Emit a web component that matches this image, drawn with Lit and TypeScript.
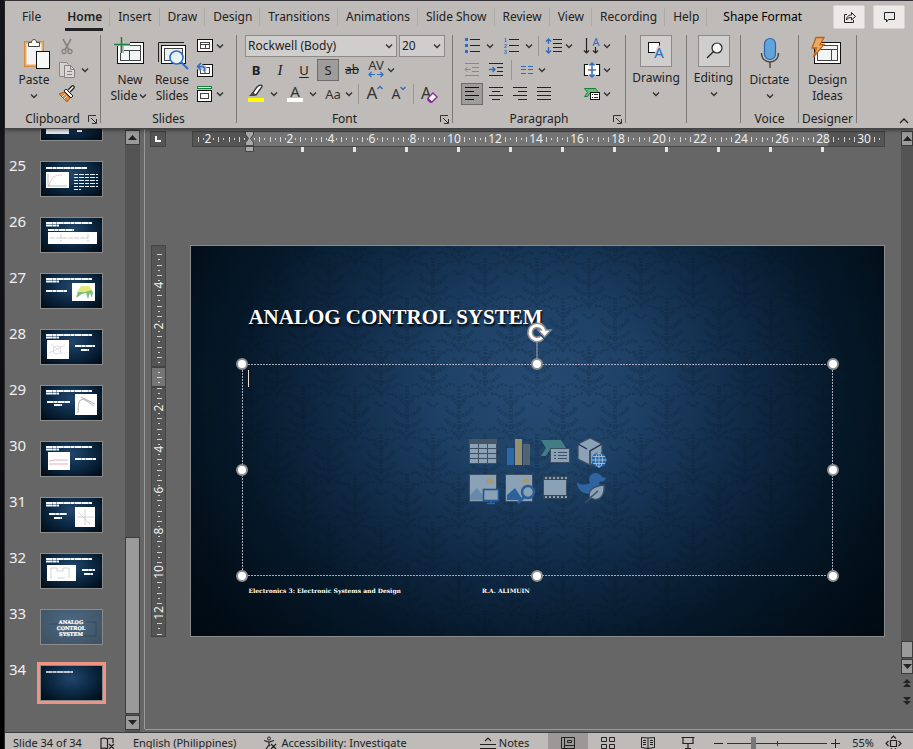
import { LitElement, html, svg, css } from "lit";
import { customElement, property } from "lit/decorators.js";

const chev = html`<svg class="chev" width="12" height="16" viewBox="0 0 12 16"><path d="M3 6.5l3 3 3-3" fill="none" stroke="#333" stroke-width="1.4"/></svg>`;

const icon = (w: number, body: unknown, h = 24) =>
  html`<svg width=${w} height=${h} viewBox="0 0 ${w} ${h}" aria-hidden="true">${body}</svg>`;

/* ---------- ribbon glyphs ---------- */
const I = {
  paste: svg`<rect x="11.500" y="7.500" width="19" height="25" fill="#f2f4f4" stroke="#c06c20" stroke-width="1"/><rect x="12.500" y="8.500" width="17" height="23" fill="none" stroke="#e9ab63" stroke-width="2"/><path d="M15.500 12.500v-4h3c0-4 5-4 5 0h3v4z" fill="#fff" stroke="#444"/><rect x="23.500" y="17.500" width="13" height="17" fill="#f8fafa" stroke="#111"/>`,
  cut: svg`<path d="M8 5l6 11M16 5l-6 11" stroke="#85827f" stroke-width="1.600" fill="none"/><circle cx="9" cy="17.500" r="2" fill="none" stroke="#85827f" stroke-width="1.300"/><circle cx="15" cy="17.500" r="2" fill="none" stroke="#85827f" stroke-width="1.300"/>`,
  copy: svg`<path d="M10 18.500H4.500v-14h7l2 2" fill="#d4d1cf" stroke="#8a8785"/><path d="M9.500 7.500h6l4 4v8h-10z" fill="#dad8d6" stroke="#85827f"/><path d="M15.500 7.500v4h4M12 13.500h5M12 16.500h5" stroke="#85827f" fill="none"/>`,
  painter: svg`<path d="M4 12l5-2 6 6-3 4z" fill="#e38a3c" stroke="#b8611a"/><path d="M7 15l3-3M9 17l3-3" stroke="#fbe0c0"/><path d="M9 9l2-2 7 7-2 2z" fill="#fff" stroke="#222"/><path d="M13 8l4-4c1-1 3 1 2 2l-4 4" fill="#fff" stroke="#222" stroke-width="1.300"/>`,
  newSlide: svg`<rect x="8.500" y="8.500" width="26" height="21" fill="#fff" stroke="#111"/><rect x="11.500" y="11.500" width="20" height="15" fill="#f2f5f5" stroke="#444"/><path d="M11 16.500h20M20.500 16.500v10" stroke="#444"/><path d="M4 10h17M13 2v17" stroke="#bfbbb8" stroke-width="4"/><path d="M5 10.500h16M12.500 3v16" stroke="#16803c" stroke-width="1.400"/>`,
  reuse: svg`<path d="M7.500 28V8.500H33" fill="none" stroke="#222"/><rect x="10.500" y="11.500" width="24" height="18" fill="#fff" stroke="#111"/><rect x="13.500" y="14.500" width="18" height="12" fill="#eef1f1" stroke="#444"/><circle cx="25.500" cy="23.500" r="6.500" fill="#e8f3f8" stroke="#2f6cc0" stroke-width="1.600"/><path d="M30 28l7 7" stroke="#2f6cc0" stroke-width="1.800"/>`,
  layout: svg`<rect x="1.500" y="5.500" width="15" height="12" fill="#fff" stroke="#111"/><rect x="4.500" y="8.500" width="9" height="6" fill="#fff" stroke="#444"/><path d="M4 10.500h10M9.500 10.500v4" stroke="#444"/>`,
  reset: svg`<rect x="1.500" y="6.500" width="15" height="12" fill="#fff" stroke="#111"/><rect x="4.500" y="9.500" width="9" height="6" fill="#fff" stroke="#444"/><path d="M9 10v5" stroke="#444"/><path d="M2 8.500h4c3 0 3 3 2 5M5 5L1.500 8.500 5 12" fill="none" stroke="#bfbbb8" stroke-width="4"/><path d="M2 8.500h4c3 0 3 3 2 5M5 5L1.500 8.500 5 12" fill="none" stroke="#2f6cc0" stroke-width="1.500"/>`,
  section: svg`<rect x="1.500" y="4.500" width="14" height="2" fill="#e4f2e6" stroke="#16803c"/><rect x="1.500" y="8.500" width="14" height="11" fill="#fff" stroke="#111"/><rect x="4.500" y="11.500" width="8" height="5" fill="#fff" stroke="#444"/>`,
  spacing: svg`<text x="9" y="12" text-anchor="middle" font-size="13" fill="#333">AV</text><path d="M2 16.500h6M10 16.500h6M4.500 14L2 16.500 4.500 19M13.500 14l2.500 2.500-2.500 2.500" fill="none" stroke="#2f6cc0" stroke-width="1.200"/>`,
  highlight: svg`<path d="M8 12l5-7c3-3 7-2 4 1l-5 7z" fill="#fff" stroke="#333" stroke-width="1.300"/><path d="M5 14l4-4 3 3-2 1z" fill="#444"/><rect x="4" y="16" width="16" height="4" fill="#ff0"/>`,
  fontColor: svg`<text x="12" y="15" text-anchor="middle" font-size="15" fill="#333">A</text><rect x="4" y="16" width="16" height="4" fill="#fff"/>`,
  changeCase: svg`<text x="8" y="17" text-anchor="middle" font-size="13" fill="#333">Aa</text>`,
  grow: svg`<text x="10" y="17" text-anchor="middle" font-size="17" fill="#333">A</text><path d="M15.500 7l2.500-2.500L20.500 7" fill="none" stroke="#2f6cc0" stroke-width="1.300"/>`,
  shrink: svg`<text x="10" y="17" text-anchor="middle" font-size="14" fill="#333">A</text><path d="M14.500 5l2.500 2.500L19.500 5" fill="none" stroke="#2f6cc0" stroke-width="1.300"/>`,
  clear: svg`<text x="9" y="17" text-anchor="middle" font-size="16" fill="#333">A</text><path d="M11 16l5-5 4 4-5 5h-2l-2-2z" fill="#fff" stroke="#8b2a9b" stroke-width="1.400"/><path d="M11 16l4 4h-2l-2-2z" fill="#8b2a9b" stroke="#8b2a9b"/>`,
  bullets: svg`<path d="M5 4h3v3H5zM5 10h3v3H5zM5 16h3v3H5z" fill="#2f6cc0"/><path d="M10 5.500h10M10 11.500h10M10 17.500h10" stroke="#222"/>`,
  numbers: svg`<g font-family="'Liberation Sans',sans-serif" font-size="5" font-weight="700" fill="#2f6cc0"><text x="5" y="8">1</text><text x="5" y="14">2</text><text x="5" y="20">3</text></g><path d="M10 5.500h10M10 11.500h10M10 17.500h10" stroke="#222"/>`,
  lineSpace: svg`<path d="M3.500 5v5M3.500 13v6M1 7.500L3.500 5 6 7.500M1 16.500L3.500 19 6 16.500" fill="none" stroke="#2f6cc0" stroke-width="1.400"/><path d="M8 5.500h9M8 9.500h9M8 13.500h9M8 17.500h9" stroke="#222"/>`,
  direction: svg`<path d="M3.500 4v15M1 16.500L3.500 19 6 16.500M12.500 13v6M10 16.500l2.500 2.500 2.500-2.500" fill="none" stroke="#222" stroke-width="1.200"/><text x="13" y="12" text-anchor="middle" font-size="11" fill="#2f6cc0">A</text>`,
  outdent: svg`<path d="M5 5.500h14M12 9.500h7M12 13.500h7M5 17.500h14M5 11.500h6M7.500 9L5 11.500 7.500 14" fill="none" stroke="#8a8785"/>`,
  indent: svg`<path d="M5 5.500h14M13 9.500h6M13 13.500h6M5 17.500h14" stroke="#222"/><path d="M5 11.500h6M8.500 9l2.500 2.500L8.500 14" fill="none" stroke="#2f6cc0" stroke-width="1.400"/>`,
  columns: svg`<path d="M3 8.500h5M10 8.500h5M3 11.500h5M10 11.500h5M3 15.500h5M10 15.500h5" stroke="#2f6cc0"/>`,
  alignText: svg`<path d="M5 6.500H1.500v11H5M13 6.500h3.500v11H13" fill="none" stroke="#111" stroke-width="1.200"/><rect x="2" y="7" width="14" height="10" fill="#fff"/><path d="M5 12h8" stroke="#222"/><path d="M9 5v14M6.500 7.500L9 5l2.500 2.500M6.500 16.500L9 19l2.500-2.500" fill="none" stroke="#2f6cc0" stroke-width="1.500"/>`,
  smartArt: svg`<path d="M1.500 6.500h11l3 4h-8l-3 4h-3l3-4z" fill="#6aba7a" stroke="#16803c"/><rect x="7.500" y="10.500" width="9" height="7" fill="#fff" stroke="#111"/><path d="M9 12.500h1M11 12.500h4M9 15.500h1M11 15.500h4" stroke="#222"/>`,
  left: svg`<path d="M5 5.500h14M5 9.500h9M5 13.500h14M5 17.500h9" stroke="#111"/>`,
  center: svg`<path d="M5 5.500h14M8 9.500h8M5 13.500h14M8 17.500h8" stroke="#222"/>`,
  right: svg`<path d="M5 5.500h14M10 9.500h9M5 13.500h14M10 17.500h9" stroke="#222"/>`,
  justify: svg`<path d="M5 5.500h14M5 9.500h14M5 13.500h14M5 17.500h14" stroke="#222"/>`,
  drawing: svg`<rect x="7.500" y="6.500" width="11" height="10" fill="#fff" stroke="#111"/><text x="18" y="22" text-anchor="middle" font-size="15" fill="#2f6cc0" stroke="#d0cecd" stroke-width="3" paint-order="stroke">A</text>`,
  editing: svg`<circle cx="18" cy="12" r="5" fill="#f4f7f7" stroke="#222" stroke-width="1.200"/><path d="M14.500 15.500L8 22" stroke="#222" stroke-width="1.300"/>`,
  mic: svg`<rect x="15.500" y="4.500" width="11" height="21" rx="5.500" fill="#62a4da" stroke="#2b63b0" stroke-width="1.200"/><path d="M12.500 19c0 12 17 12 17 0M21 28v6" fill="none" stroke="#444" stroke-width="1.400"/>`,
  ideas: svg`<rect x="7.500" y="8.500" width="26" height="21" fill="#fff" stroke="#111"/><rect x="10.500" y="11.500" width="20" height="15" fill="#f3f5f5" stroke="#444"/><path d="M10 15.500h21M24.500 15.500v11" stroke="#444"/><path d="M9 3.500h8l-4 7h4L6.500 23l3-9H5z" fill="#e9ab63" stroke="#b8611a" stroke-width="1.300"/>`,
};

/* ---------- slide content placeholder glyphs, 36 x 36 ---------- */
const P = "#8ba1b5";
const D = "#3c4f62";
const inserts: [string, unknown][] = [
  ["Table", svg`<rect x="4.500" y="5.500" width="27" height="24" fill="${P}" stroke="${D}"/><path d="M4 5h28v5H4z" fill="#465665"/><path d="M4 14.500h28M4 19.500h28M4 24.500h28M13.500 10v20M22.500 10v20" stroke="${D}"/>`],
  ["Chart", svg`<path d="M6 14h7v17H6z" fill="#2f66a5"/><path d="M14 5h7v26h-7z" fill="#94906f"/><path d="M22 10h7v21h-7z" fill="#526374"/>`],
  ["SmartArt", svg`<path d="M4 6h20l5 8H14l-5 8H4l5-8z" fill="#427c85"/><rect x="13.500" y="14.500" width="19" height="14" fill="${P}" stroke="${D}"/><path d="M17 18.500h2M21 18.500h9M17 21.500h2M21 21.500h9M17 24.500h2M21 24.500h9" stroke="${D}"/>`],
  ["3D model", svg`<path d="M17 4l12 6v15l-12 6-12-6V10z" fill="${P}" stroke="${D}" stroke-width="1.300"/><path d="M5 10l9 5M17 30V17l12-7" fill="none" stroke="#203040" stroke-width="1.400"/><circle cx="26" cy="26" r="7.500" fill="#2668ac" /><path d="M18.500 26h15M26 18.500v15M20 22.500h12M20 29.500h12" stroke="#9fb9d2"/><ellipse cx="26" cy="26" rx="3.500" ry="7" fill="none" stroke="#9fb9d2"/>`],
  ["Picture from file", svg`<rect x="4.500" y="4.500" width="27" height="27" fill="${P}" stroke="${D}"/><path d="M5 30v-5l7-7 10 12z" fill="#6689ac"/><circle cx="25" cy="11" r="3" fill="#a39a70"/><rect x="18.500" y="19.500" width="15" height="11" fill="${P}" stroke="#1e5898" stroke-width="1.600"/><path d="M22 33.500h8M26 31v3" stroke="#2f66a5" stroke-width="1.500"/>`],
  ["Stock image", svg`<rect x="4.500" y="4.500" width="27" height="27" fill="${P}" stroke="${D}"/><path d="M6 30v-5l8-7 8 12z" fill="#2c619c"/><circle cx="25" cy="11" r="3" fill="#a39a70"/><circle cx="27" cy="22" r="6" fill="${P}" stroke="#2a5f9b" stroke-width="2.500"/><path d="M23 27l-6 6" stroke="#2a5f9b" stroke-width="3"/>`],
  ["Video", svg`<rect x="6.500" y="6.500" width="23" height="22" fill="${P}" stroke="${D}"/><path d="M6 8h24M6 27h24" stroke="#34475a" stroke-width="4"/><path d="M8 8h22M8 27h22" stroke="${P}" stroke-width="2" stroke-dasharray="2 2"/>`],
  ["Icon", svg`<path d="M4 12c4 4 8 3 13 1-2-3-1-9 5-10 4 0 6 2 7 4l4 1c-1 3-4 4-7 4 2 5-1 9-6 11-9 3-16-3-16-11z" fill="#2e649f"/><path d="M12 33l5-5c-3-7 3-12 14-13 1 11-5 17-13 13M17 28l8-7" fill="${P}" stroke="${D}" stroke-width="1.300"/>`],
];

/* ---------- thumbnails, 61 x 34 ---------- */
const lineText = (x: number, y: number, w: number) =>
  svg`<path d="M${x} ${y}h${w}" stroke="#f4f8fb" stroke-width="2" stroke-dasharray="6 .3 4 .4 7 .3"/>`;
const heading = svg`${lineText(5, 5, 46)}${lineText(5, 7.5, 13)}`;
const thumbs: { n: number; art: unknown }[] = [
  { n: 24, art: svg`<rect x="5" y="14" width="23" height="14" fill="#e6eaee"/>${lineText(36, 25, 5)}` },
  { n: 25, art: svg`${lineText(5, 6, 41)}<rect x="5" y="10" width="23" height="16" fill="#fff"/><path d="M8 24c2-9 6-11 13-11" fill="none" stroke="#f0a090" stroke-width=".6"/><path d="M7 12v12h19" fill="none" stroke="#777" stroke-width=".5"/><path d="M33 12.500h24M33 15.500h24M33 18.500h24M33 21.500h24M33 24.500h24M33 27.500h7" stroke="#e5edf2" stroke-dasharray="4 1 5 1"/>` },
  { n: 26, art: svg`${heading}${lineText(7, 12, 26)}<rect x="7" y="14" width="49" height="12" fill="#fff"/><path d="M9 20h38M20 16v8M47 16v8" stroke="#999" stroke-width=".5" stroke-dasharray="5 1"/>` },
  { n: 27, art: svg`${heading}${lineText(5, 17, 21)}<rect x="31" y="9" width="23" height="18" fill="#fff"/><path d="M35 24l2-7 5-4h6l4 5-1 6-2-5-2 6-2-6-4 1z" fill="#7fc07a"/><path d="M36 18l4-6h8l3 4-7 2z" fill="#e3e97a"/>` },
  { n: 28, art: svg`${heading}${lineText(34, 16, 20)}${lineText(40, 20, 8)}<rect x="6" y="10" width="22" height="19" fill="#fff"/><circle cx="16" cy="20" r="4" fill="none" stroke="#bbc" stroke-width=".5"/><path d="M8 23l16-8M10 14l12 10" stroke="#bbc" stroke-width=".5"/>` },
  { n: 29, art: svg`${heading}${lineText(6, 16, 23)}${lineText(13, 19, 8)}<rect x="34" y="8" width="22" height="21" fill="#fff"/><path d="M37 27c0-20 6-14 16-7M40 11l14 7" fill="none" stroke="#777" stroke-width=".6"/>` },
  { n: 30, art: svg`${heading}${lineText(34, 17, 21)}<rect x="7" y="10" width="22" height="18" fill="#fff"/><path d="M8 19l5-1h14M8 22h19" fill="none" stroke="#e58a98" stroke-width=".7"/>` },
  { n: 31, art: svg`${heading}${lineText(8, 16, 18)}${lineText(13, 20, 8)}<rect x="34" y="9" width="20" height="20" fill="#fff"/><path d="M44 11v16M36 19h17M37 14l12 12" stroke="#aaa" stroke-width=".5"/>` },
  { n: 32, art: svg`${heading}${lineText(41, 16, 13)}${lineText(43, 20, 9)}<rect x="6" y="11" width="29" height="16" fill="#fff"/><path d="M10 25V14h6v3h6v-3h6v10M16 24h8" fill="none" stroke="#bbb" stroke-width=".6"/>` },
  { n: 33, art: svg`<rect width="61" height="34" fill="#6b8093" opacity=".6"/><path d="M8 14h10M45 12h10v14H40" stroke="#2b3f52" stroke-width=".6" fill="none"/><g font-family="'DejaVu Serif',serif" font-weight="700" font-size="5" fill="#fff" stroke="#fff" stroke-width=".2" text-anchor="middle"><text x="30" y="14">ANALOG</text><text x="30" y="20">CONTROL</text><text x="30" y="26">SYSTEM</text></g>` },
  { n: 34, art: svg`<path d="M5 6h27" stroke="#f4f8fb" stroke-width="1.300" stroke-dasharray="6 .3 4 .4 7 .3"/>` },
];

/* ---------- rulers ---------- */
const CM = 20.5;
function ruler(zero: number, length: number, vertical: boolean) {
  const out: unknown[] = [];
  const from = Math.ceil((4 - zero) / (CM / 4));
  const to = Math.floor((length - 4 - zero) / (CM / 4));
  for (let q = from; q <= to; q++) {
    if (q === 0) continue;
    const p = Math.round(zero + (q * CM) / 4);
    if (q % 8 === 0) {
      const label = String(Math.abs(q / 4));
      out.push(
        vertical
          ? svg`<text transform="translate(12 ${p}) rotate(-90)" text-anchor="middle">${label}</text>`
          : svg`<text x=${p} y="12" text-anchor="middle">${label}</text>`
      );
      continue;
    }
    const besideTwoDigits = q > 36 && (q % 8 === 1 || q % 8 === 7);
    if (besideTwoDigits) continue;
    const size = q % 2 === 0 ? 5 : 2;
    const a = 8 - Math.floor(size / 2);
    out.push(vertical
      ? svg`<rect x=${a} y=${p} width=${size} height="1" opacity=".8"/>`
      : svg`<rect x=${p} y=${a} width="1" height=${size} opacity=".8"/>`);
  }
  return out;
}
const stops = Array.from({ length: 11 }, (_, i) => svg`<rect x=${111 + i * 52} y="16" width="3" height="5" fill="#e4e4e4"/>`);
const arrow = (d: string) => html`<svg width="9" height="5" viewBox="0 0 9 5"><path d=${d} fill="#222"/></svg>`;
const UP = "M4.500 0L9 5H0z";
const DOWN = "M0 0h9L4.500 5z";

const base = css`
  * { box-sizing: border-box; }
  svg { display: block; flex: none; overflow: visible; }
  button { font: inherit; color: inherit; background: none; border: 0; padding: 0; margin: 0; }
`;

@customElement("ribbon-group")
class RibbonGroup extends LitElement {
  @property() label = "";
  @property({ type: Boolean }) launcher = false;
  static styles = [base, css`
    :host { display: flex; flex: none; height: 94px; }
    .col { flex: 1; display: flex; flex-direction: column; min-width: 0; }
    .body { height: 72px; display: flex; }
    .foot { height: 18px; margin-top: 4px; display: flex; align-items: center; justify-content: center; position: relative; }
    .foot button { position: absolute; right: 3px; top: 5px; }
    .line { width: 1px; margin: 1px 0 5px; background: #7b7876; }
  `];
  render() {
    return html`
      <div class="col">
        <div class="body"><slot></slot></div>
        <div class="foot">
          <span>${this.label}</span>
          ${this.launcher ? html`<button aria-label="${this.label} settings"><svg width="9" height="9" viewBox="0 0 9 9"><path d="M.5 7V.5H8M3 3l5 5M8.500 4v4.500H4" fill="none" stroke="#333"/></svg></button>` : ""}
        </div>
      </div>
      <div class="line"></div>`;
  }
}

@customElement("app-root")
class AppRoot extends LitElement {
  static styles = [base, css`
    :host { display: flex; height: 100vh; overflow: hidden; background: #111214; color: #222; font: 12px/16px "Noto Sans", "Open Sans", sans-serif; }
    .edge { width: 5px; flex: none; background: linear-gradient(#16171a, #0c0d0f 60%, #000); border-right: 1px solid #2c2c2e; }
    .window { flex: 1; min-width: 0; display: flex; flex-direction: column; border-top: 1px solid #3c3a3e; background: #666; }

    .ribbon { flex: none; background: #bfbbb8; border-bottom: 1px solid #454446; position: relative; z-index: 1; box-shadow: 0 1px 4px rgba(0, 0, 0, .5); }
    .tabs { display: flex; height: 33px; align-items: center; padding: 0 8px 2px 9px; }
    .tab { height: 18px; padding: 0 7px 0 8px; border-right: 1px solid #aeaaa7; white-space: nowrap; position: relative; }
    .tab.plain { border-right-color: transparent; }
    .tab.first { padding-right: 17px; }
    .tab.context { color: #000; padding-left: 16px; }
    .tab.on { font-weight: 600; }
    .tab.on::after { content: ""; position: absolute; left: 6px; right: 6px; bottom: -5px; height: 3px; background: #222; }
    .grow { flex: 1; }
    .corner { width: 32px; height: 24px; margin-left: 8px; display: flex; align-items: center; justify-content: center; background: #eceae9; border: 1px solid #d6d3d1; border-radius: 2px; flex: none; }
    .groups { display: flex; height: 94px; }
    .fold { margin: auto 4px 4px auto; }

    .g58 { width: 58px; } .g54 { width: 54px; } .g61 { width: 61px; }
    .clip { width: 96px; } .slides { width: 136px; } .font { width: 216px; } .para { width: 173px; }
    .big { width: 42px; display: flex; flex-direction: column; align-items: center; white-space: nowrap; flex: none; }
    .big .row { display: flex; align-items: center; }
    .mid { margin: 0 auto; }
    .boxed { width: 32px; height: 32px; margin: 1px 0 3px; background: #d0cecd; border: 1px solid #8d8a88; }
    .lead { margin-left: 8px; }
    .stack { display: flex; flex-direction: column; }
    .rows { display: flex; flex-direction: column; padding-left: 7px; }
    .line { display: flex; height: 24px; align-items: center; }
    .btn { display: flex; align-items: center; justify-content: center; height: 24px; flex: none; }
    .sq { width: 24px; font-size: 13px; }
    .gap3 { margin-left: 3px; }
    .gap6 { margin-left: 6px; }
    .bar { width: 1px; height: 20px; background: #99958f; margin: 0 3px; flex: none; }
    .on24 { width: 22px; height: 22px; margin: 0 1px; background: #9f9d9b; border: 1px solid #6e6c6a; }
    .b { font-weight: 700; } .i { font-style: italic; font-family: "Liberation Serif", serif; font-size: 15px; } .u { text-decoration: underline; text-underline-offset: 2px; } .s { text-decoration: line-through; font-size: 12px; }
    .combo { position: relative; display: flex; height: 22px; margin: 0 2px 0 1px; background: #d0cecd; border: 1px solid #8d8a88; }
    .combo select { appearance: none; background: none; border: 0; outline: 0; width: 100%; padding: 0 2px; font: inherit; color: #222; }
    .combo .chev { position: absolute; right: 1px; top: 2px; pointer-events: none; }
    .family { width: 152px; } .size { width: 46px; margin-left: 0; }

    .main { flex: 1; min-height: 0; display: flex; }
    .list { width: 120px; flex: none; display: flex; flex-direction: column; justify-content: flex-end; gap: 20px; padding-bottom: 31px; overflow: hidden; }
    .item { display: flex; height: 36px; flex: none; text-align: left; }
    .num { width: 35px; padding-left: 4px; font-size: 15px; line-height: 8px; color: #f0f0f0; }
    .thumb { width: 63px; height: 36px; border: 1px solid #8a8a8a; background: radial-gradient(ellipse at 50% 36%, #21466b, #0d2b47 45%, #020f1b 90%); }
    .thumb.sel { outline: 3px solid #ee9484; }
    .scroll { width: 15px; flex: none; display: flex; flex-direction: column; background: #545454; padding: 1px 0 2px; }
    .step { height: 15px; display: flex; align-items: center; justify-content: center; background: #9a9a9a; border: 1px solid #3c3c3c; flex: none; }
    .grip { background: #9a9a9a; border: 1px solid #3c3c3c; flex: none; margin-bottom: 1px; }
    .grip.long { height: 177px; } .grip.short { height: 17px; }
    .scroll.end { grid-column: 3; grid-row: 1 / -1; width: auto; padding: 0; }
    .after { background: #666; height: 55px; display: flex; flex-direction: column; align-items: center; gap: 10px; padding-top: 5px; flex: none; }
    .split { width: 1px; background: #999; margin: 0 0 3px 4px; flex: none; }
    .editor { flex: 1; min-width: 0; margin-bottom: 2px; border-bottom: 1px solid #999; display: grid; grid-template-columns: 16px minmax(0, 1fr) 12px; grid-template-rows: 22px 1fr auto 1fr; padding: 2px 0 0 5px; }
    .tabkind { height: 16px; border: 1px solid #444; background: #555; display: flex; align-items: center; justify-content: center; }
    .hr { grid-column: 2; margin: 0 16px 0 26px; height: 16px; font-size: 12px; fill: #eee; background: #555; outline: 1px solid #444; outline-offset: -1px; }
    .hr svg { width: 100%; height: 21px; }
    .vr { grid-column: 1; grid-row: 3; margin-left: 1px; font-size: 12px; fill: #eee; overflow: hidden; background: #555; border: 1px solid #444; }
    .vr svg { height: 0; min-height: 100%; margin-left: -1px; }
    .slide { grid-column: 2; grid-row: 3; margin: 0 16px 0 24px; aspect-ratio: 695 / 392; position: relative; border: 1px solid #8a8a8a; color: #fff; overflow: hidden;
      background: radial-gradient(ellipse 60% 92% at 50% 37%, #264b73 0%, #1e4166 24%, #102a46 50%, #051828 74%, #010b14 100%); }
    .damask { position: absolute; inset: 0; width: 100%; height: 100%; }
    .title { position: absolute; left: 8%; top: 15%; margin: 0 0 0 2px; font: 700 21px/24px "Liberation Serif", serif; white-space: nowrap; text-shadow: 1px 2px 2px #000; }
    .foot1, .foot2 { position: absolute; top: 87%; margin-top: 1px; font: 700 6px/10px "DejaVu Serif", serif; white-space: nowrap; }
    .foot1 { left: 8%; margin-left: 2px; } .foot2 { left: 42%; }
    .box { position: absolute; left: 7%; right: 7%; top: 30%; bottom: 15%; margin: 1px 3px 2px 2px; display: flex; align-items: center; justify-content: center;
      background: repeating-linear-gradient(90deg, #aab 0 2px, transparent 2px 3px) top / 100% 1px no-repeat, repeating-linear-gradient(90deg, #aab 0 2px, transparent 2px 3px) bottom / 100% 1px no-repeat,
        repeating-linear-gradient(#aab 0 2px, transparent 2px 3px) left / 1px 100% no-repeat, repeating-linear-gradient(#aab 0 2px, transparent 2px 3px) right / 1px 100% no-repeat; }
    .inserts { display: grid; grid-template-columns: repeat(4, 36px); }
    .knob { position: absolute; width: 12px; height: 12px; margin: -6px; border-radius: 50%; background: #fff; border: 2px solid #8f8f8f; }
    .l { left: 0; } .c { left: 50%; } .r { left: 100%; } .t { top: 0; } .m { top: 50%; } .d { top: 100%; }
    .caret { position: absolute; left: 6px; top: 6px; width: 1px; height: 17px; background: #f6dcc6; }
    .turn { position: absolute; left: 50%; top: -45px; margin-left: -12px; }

    .status { flex: none; height: 17px; background: #bfbbb8; border-top: 1px solid #3c3c3c; overflow: hidden; font-size: 11px; }
    .inner { height: 20px; display: flex; align-items: center; padding: 0 12px 0 8px; white-space: nowrap; }
    .inner > * { flex: none; }
    .inner > .grow { flex: 1; }
    .gap18 { margin-left: 18px; } .gap27 { margin-left: 27px; }
    .notes { display: flex; align-items: center; gap: 3px; margin-right: 19px; }
    .view { width: 40px; height: 20px; display: flex; align-items: center; justify-content: center; }
    .view.on { background: #9b9997; }
    .zoom { appearance: none; width: 100px; height: 20px; margin: 0 4px; background: linear-gradient(#333, #333) center / 1px 5px no-repeat, linear-gradient(#333, #333) center / 100% 1px no-repeat; }
    .zoom::-webkit-slider-thumb { appearance: none; width: 5px; height: 12px; background: #777; border: 0; border-radius: 0; }
    .fit { margin-left: 12px; }
  `];

  private tabs = ["File", "Home", "Insert", "Draw", "Design", "Transitions", "Animations", "Slide Show", "Review", "View", "Recording", "Help", "Shape Format"];

  private btn(name: string, w: number, body: unknown, drop = false, cls = "") {
    return html`<button class="btn ${cls}" aria-label=${name}>${icon(w, body)}${drop ? chev : ""}</button>`;
  }

  private ribbon() {
    return html`
      <header class="ribbon">
        <nav class="tabs">
          ${this.tabs.map((t) => html`<button class="tab ${t === "File" ? "plain first" : t === "Home" ? "on" : t === "Shape Format" ? "plain context" : ""}">${t}</button>`)}
          <span class="grow"></span>
          <button class="corner" aria-label="Share">${icon(16, svg`<path d="M6 5.500H3.500v8h9V11M5.500 11c0-4 3-5 5-5V3.500l4 4-4 3.500V8.500c-2 0-4 .5-5 2.500z" fill="none" stroke="#222"/>`, 16)}</button>
          <button class="corner" aria-label="Comments">${icon(16, svg`<path d="M3.500 3.500h10v7h-6l-2 2.500v-2.500h-2z" fill="none" stroke="#222"/>`, 16)}</button>
        </nav>
        <div class="groups">
          <ribbon-group class="clip" label="Clipboard" launcher>
            <button class="big lead">${icon(42, I.paste, 38)}<span>Paste</span>${chev}</button>
            <div class="stack">
              ${this.btn("Cut", 24, I.cut, false, "sq")}
              ${this.btn("Copy", 24, I.copy, true)}
              ${this.btn("Format Painter", 24, I.painter, false, "sq")}
            </div>
          </ribbon-group>
          <ribbon-group class="slides" label="Slides">
            <button class="big lead">${icon(42, I.newSlide, 38)}<span>New</span><span class="row">Slide${chev}</span></button>
            <button class="big">${icon(42, I.reuse, 38)}<span>Reuse</span><span>Slides</span></button>
            <div class="stack gap3">
              ${this.btn("Layout", 18, I.layout, true)}
              <div class="line">${this.btn("Reset", 18, I.reset)}</div>
              ${this.btn("Section", 18, I.section, true)}
            </div>
          </ribbon-group>
          <ribbon-group class="font" label="Font" launcher>
            <div class="rows">
              <div class="line">
                <label class="combo family"><select aria-label="Font"><option>Rockwell (Body)</option></select>${chev}</label>
                <label class="combo size"><select aria-label="Font size"><option>20</option></select>${chev}</label>
              </div>
              <div class="line">
                <button class="btn sq b">B</button><button class="btn sq i">I</button><button class="btn sq u">U</button>
                <button class="btn sq on24">S</button><button class="btn sq s">ab</button>
                ${this.btn("Character Spacing", 18, I.spacing, true, "gap3")}
              </div>
              <div class="line">
                ${this.btn("Highlight", 24, I.highlight, true)}
                ${this.btn("Font Color", 24, I.fontColor, true, "gap3")}
                ${this.btn("Change Case", 18, I.changeCase, true, "gap6")}
                <i class="bar gap6"></i>
                ${this.btn("Grow Font", 24, I.grow)}
                ${this.btn("Shrink Font", 24, I.shrink)}
                <i class="bar"></i>
                ${this.btn("Clear Formatting", 24, I.clear)}
              </div>
            </div>
          </ribbon-group>
          <ribbon-group class="para" label="Paragraph" launcher>
            <div class="rows">
              <div class="line">
                ${this.btn("Bullets", 24, I.bullets, true)}
                ${this.btn("Numbering", 24, I.numbers, true, "gap3")}
                <i class="bar gap6"></i>
                ${this.btn("Line Spacing", 18, I.lineSpace, true, "gap3")}
                <span class="grow"></span>
                ${this.btn("Text Direction", 18, I.direction, true, "gap6")}
              </div>
              <div class="line">
                ${this.btn("Outdent", 24, I.outdent)}${this.btn("Indent", 24, I.indent)}
                <i class="bar"></i>
                ${this.btn("Columns", 18, I.columns, true, "gap3")}
                <span class="grow"></span>
                ${this.btn("Align Text", 18, I.alignText, true, "gap6")}
              </div>
              <div class="line">
                ${this.btn("Align Left", 24, I.left, false, "on24")}${this.btn("Center", 24, I.center)}${this.btn("Align Right", 24, I.right)}${this.btn("Justify", 24, I.justify)}
                <span class="gap27"></span>
                ${this.btn("SmartArt", 18, I.smartArt, true)}
              </div>
            </div>
          </ribbon-group>
          <ribbon-group class="g61"><button class="big mid"><span class="boxed">${icon(30, I.drawing, 30)}</span><span>Drawing</span>${chev}</button></ribbon-group>
          <ribbon-group class="g54"><button class="big mid"><span class="boxed">${icon(30, I.editing, 30)}</span><span>Editing</span>${chev}</button></ribbon-group>
          <ribbon-group class="g58" label="Voice"><button class="big mid">${icon(42, I.mic, 38)}<span>Dictate</span>${chev}</button></ribbon-group>
          <ribbon-group class="g58" label="Designer"><button class="big mid">${icon(42, I.ideas, 38)}<span>Design</span><span>Ideas</span></button></ribbon-group>
          <button class="fold" aria-label="Collapse ribbon">${icon(10, svg`<path d="M1 6l4-4 4 4" fill="none" stroke="#222" stroke-width="1.300"/>`, 7)}</button>
        </div>
      </header>`;
  }

  private slide() {
    return html`
      <div class="slide">
        <svg class="damask">
          <defs>
            <g id="motif">
              <g fill="none" stroke="#020f1c" stroke-width="4" stroke-dasharray="2 1 3 1">
                <path d="M0-26v46M-7-17c1 6 4 8 7 10 3-2 6-4 7-10M-13-6c2 8 8 9 13 10 5-1 11-2 13-10M-14 7c4 6 9 7 14 7 5 0 10-1 14-7M-8 18c3 3 5 4 8 8 3-4 5-5 8-8"/>
              </g>
              <path d="M-22 18c4-3 8-2 11 3M22 18c-4-3-8-2-11 3M-20-18c5-1 8 1 10 4M20-18c-5-1-8 1-10 4M-6 34l6 5 6-5" fill="none" stroke="#020f1c" stroke-width="2.500" stroke-dasharray="3 1"/>
            </g>
            <pattern id="damask" width="52" height="88" patternUnits="userSpaceOnUse" patternTransform="translate(8 12)">
              <use href="#motif" x="26" y="22"/><use href="#motif" x="0" y="66"/><use href="#motif" x="52" y="66"/><use href="#motif" x="0" y="-22"/><use href="#motif" x="52" y="-22"/>
            </pattern>
          </defs>
          <rect width="100%" height="100%" fill="url(#damask)" opacity=".16"/>
        </svg>
        <h1 class="title">ANALOG CONTROL SYSTEM</h1>
        <div class="box">
          <div class="inserts">${inserts.map(([n, g]) => html`<button aria-label=${n}>${icon(36, g, 36)}</button>`)}</div>
          <svg class="turn" width="26" height="45" viewBox="0 0 26 45">
            <path d="M12 20v20" stroke="#a5adb5"/>
            <path d="M17 18.500a7 7 0 1 1 2-6.500" fill="none" stroke="#8f8f8f" stroke-width="6"/>
            <path d="M13 11h13l-6.500 7z" fill="#fff" stroke="#8f8f8f" stroke-width="1.500"/>
            <path d="M17 18.500a7 7 0 1 1 2-6.500" fill="none" stroke="#fff" stroke-width="3"/>
          </svg>
          ${["l t", "c t", "r t", "l m", "r m", "l d", "c d", "r d"].map((p) => html`<i class="knob ${p}"></i>`)}
          <i class="caret"></i>
        </div>
        <span class="foot1">Electronics 3: Electronic Systems and Design</span>
        <span class="foot2">R.A. ALIMUIN</span>
      </div>`;
  }

  private status() {
    return html`
      <footer class="status"><div class="inner">
        <span>Slide 34 of 34</span>
        <button class="gap18" aria-label="Spelling">${icon(15, svg`<path d="M7.500 3v10M7.500 3c-2-1-4-1-6.500-.5v10c2.500-.5 5-.5 6.500.5M7.500 3c1.500-1 3-1 5.500-.5V7M9 8l5 5M14 8l-5 5" fill="none" stroke="#222" stroke-width="1.200"/>`, 14)}</button>
        <span class="gap18">English (Philippines)</span>
        <button class="notes gap27">${icon(15, svg`<circle cx="6" cy="2.500" r="1.500" fill="none" stroke="#222"/><path d="M1 4.500l5 1.500 5-1.500M6 6v3l-3 4M6 9l1 1M8 8l5 5M13 8l-5 5" fill="none" stroke="#222" stroke-width="1.200"/>`, 14)}<span>Accessibility: Investigate</span></button>
        <span class="grow"></span>
        <button class="notes">${icon(16, svg`<path d="M0 8.500h16M0 12.500h16M5 5l3-3 3 3" fill="none" stroke="#222" stroke-width="1.200"/>`, 14)}<span>Notes</span></button>
        <button class="view on" aria-label="Normal">${icon(14, svg`<path d="M.5 1.500h13v11H.5zM3.500 1.500v11M3.500 9.500h10M6.500 4.500h4v2h-4z" fill="none" stroke="#222"/>`, 14)}</button>
        <button class="view" aria-label="Slide Sorter">${icon(14, svg`<path d="M.5 1.500h5v4h-5zM8.500 1.500h5v4h-5zM.5 8.500h5v4h-5zM8.500 8.500h5v4h-5z" fill="none" stroke="#222"/>`, 14)}</button>
        <button class="view" aria-label="Reading View">${icon(14, svg`<path d="M7 2.500v10M7 2L.5 1.500v10L7 12.500l6.500-1v-10zM2 4.500h3M2 6.500h3M2 8.500h3M9 4.500h3M9 6.500h3M9 8.500h3" fill="none" stroke="#222"/>`, 14)}</button>
        <button class="view" aria-label="Slide Show">${icon(14, svg`<path d="M.5 1.500h13M2 1.500v6h10v-6M7 7.500v5M4 12.500h6" fill="none" stroke="#222" stroke-width="1.200"/>`, 14)}</button>
        <button class="gap6" aria-label="Zoom out">${icon(9, svg`<path d="M0 4.500h9" stroke="#222"/>`, 9)}</button>
        <input class="zoom" type="range" aria-label="Zoom" min="10" max="190" value="55" />
        <button aria-label="Zoom in">${icon(9, svg`<path d="M0 4.500h9M4.500 0v9" stroke="#222"/>`, 9)}</button>
        <button class="fit">55%</button>
        <button class="fit" aria-label="Fit slide">${icon(15, svg`<path d="M4.500 4.500h6v6h-6zM5 2.500L7.500 0 10 2.500M5 12.500L7.500 15l2.500-2.500M2.500 5L0 7.500 2.500 10M12.500 5L15 7.500 12.500 10" fill="none" stroke="#222" stroke-width="1.200"/>`, 15)}</button>
      </div></footer>`;
  }

  render() {
    return html`
      <div class="edge"></div>
      <div class="window">
        ${this.ribbon()}
        <main class="main">
          <div class="list">
            ${thumbs.map((t) => html`<button class="item" aria-label="Slide ${t.n}"><span class="num">${t.n > 24 ? t.n : ""}</span><span class="thumb ${t.n === 34 ? "sel" : ""}">${icon(61, t.art, 34)}</span></button>`)}
          </div>
          <div class="scroll">
            <button class="step" aria-label="Scroll up">${arrow(UP)}</button><span class="grow"></span>
            <div class="grip long"></div><button class="step" aria-label="Scroll down">${arrow(DOWN)}</button>
          </div>
          <div class="split"></div>
          <section class="editor">
            <button class="tabkind" aria-label="Tab type"><svg width="6" height="6" viewBox="0 0 6 6"><path d="M1 0v5h5" fill="none" stroke="#fff" stroke-width="2"/></svg></button>
            <div class="hr"><svg>
              <rect x="57" y="1" width="579" height="14" fill="#757575"/>
              ${ruler(57, 693, false)}
              <g transform="translate(-2 0)">${stops}
              <path d="M55.500.500h8v3l-3 4 3 4v9h-8v-9l3-4-3-4zM55.500 14.500h8" fill="#aaa" stroke="#444"/></g>
            </svg></div>
            <div class="vr"><svg width="16">
              <rect y="121" width="16" height="20" fill="#757575"/><path d="M0 121h16M0 141h16" stroke="#444" stroke-width="2"/>
              ${ruler(121, 392, true)}
            </svg></div>
            ${this.slide()}
            <div class="scroll end">
              <button class="step" aria-label="Previous">${arrow(UP)}</button><span class="grow"></span>
              <div class="grip short"></div><button class="step" aria-label="Next">${arrow(DOWN)}</button>
              <div class="after">
                <button aria-label="Previous slide">${icon(8, svg`<path d="M4 0l4 4H0zM4 4l4 4H0z" fill="#222"/>`, 8)}</button>
                <button aria-label="Next slide">${icon(8, svg`<path d="M4 4l4-4H0zM4 8l4-4H0z" fill="#222"/>`, 8)}</button>
              </div>
            </div>
          </section>
        </main>
        ${this.status()}
      </div>`;
  }
}
